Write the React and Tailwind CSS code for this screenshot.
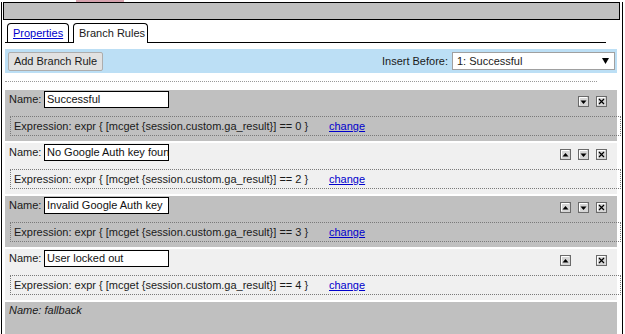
import React from "react";

const rules = [
  { name: "Successful", value: 0, tone: "dark", up: false, down: true },
  { name: "No Google Auth key found", value: 2, tone: "light", up: true, down: true },
  { name: "Invalid Google Auth key", value: 3, tone: "dark", up: true, down: true },
  { name: "User locked out", value: 4, tone: "light", up: true, down: false },
];

function IconBtn({ kind }) {
  return (
    <svg width="11" height="11" viewBox="0 0 11 11" className="block">
      <rect x="0.5" y="0.5" width="10" height="10" fill="#d6d6d6" stroke="#6a6a6a" />
      <path d="M1.5 9V1.5H9" stroke="#ffffff" fill="none" />
      {kind === "up" && <path d="M2.5 7.5h6L5.5 4z" fill="#000" />}
      {kind === "down" && <path d="M2.5 4.5h6L5.5 8z" fill="#000" />}
      {kind === "x" && (
        <path d="M3 3l5 5M8 3l-5 5" stroke="#000" strokeWidth="1.2" fill="none" />
      )}
    </svg>
  );
}

function Rule({ rule }) {
  const bg = rule.tone === "dark" ? "bg-[#c0c0c0]" : "bg-[#f0f0f0]";
  return (
    <div className={`mt-[2px] ml-[3px] w-[612px] h-[51px] ${bg}`}>
      <div className="flex">
        <div className="flex items-center h-[17px] mt-[1px]">
          <span className="w-[39px] pl-[4px]">Name:</span>
          <div className="w-[125px] h-[17px] border border-black bg-white pl-[2px] leading-[15px] overflow-hidden whitespace-nowrap text-[#111]">
            {rule.name}
          </div>
        </div>
        <div className="ml-auto mr-[10px] mt-[6px] flex gap-[7px]">
          <div className="w-[11px] h-[11px]">{rule.up && <IconBtn kind="up" />}</div>
          <div className="w-[11px] h-[11px]">{rule.down && <IconBtn kind="down" />}</div>
          <div className="w-[11px] h-[11px]">
            <IconBtn kind="x" />
          </div>
        </div>
      </div>
      <div className="mt-[8px] ml-[5px] w-[611px] h-[20px] border border-dotted border-[#7a7a7a] flex items-center pl-[3px] whitespace-nowrap">
        <span className="w-[315px]">
          Expression: expr {"{"} [mcget {"{"}session.custom.ga_result{"}"}] == {rule.value} {"}"}
        </span>
        <a href="#" className="text-[#0000cc] underline">
          change
        </a>
      </div>
    </div>
  );
}

function App() {
  return (
    <div className="relative w-[625px] h-[334px] bg-white overflow-hidden font-['Liberation_Sans',Arial,sans-serif] text-[11px] text-[#1a1a1a]">
      <div className="absolute left-[76px] top-0 w-[48px] h-[2px] bg-[#d7a3ae]" />
      <div className="ml-[1px] w-[622px] h-[334px] border-l border-r border-black">
        <div className="mt-[2px] ml-[1px] w-[617px] h-[18px] border border-black bg-[#c0c0c0]" />

        {/* tabs */}
        <div className="mt-[3px] ml-[3px] w-[601px] h-[20px] flex items-end border-b border-black">
          <div className="ml-[2px] w-[62px] h-[19px] border border-b-0 border-black rounded-t-[4px] flex items-center pl-[5px] whitespace-nowrap">
            <a href="#" className="text-[#0000cc] underline">
              Properties
            </a>
          </div>
          <div className="ml-[4px] w-[75px] h-[20px] -mb-px border border-b-0 border-black rounded-t-[4px] bg-white flex items-center pl-[5px] whitespace-nowrap">
            Branch Rules
          </div>
        </div>

        {/* toolbar */}
        <div className="mt-[6px] ml-[3px] w-[612px] h-[24px] bg-[#bcdff5] flex items-center pl-[3px] pr-[2px]">
          <button className="h-[19px] w-[95px] border border-[#adadad] bg-[#e1e1e1] rounded-[2px] text-[11px] text-[#1a1a1a] whitespace-nowrap">
            Add Branch Rule
          </button>
          <span className="ml-auto mr-[4px]">Insert Before:</span>
          <div className="w-[163px] h-[18px] border border-[#a0a0a0] bg-white flex items-center pl-[4px] pr-[5px]">
            <span>1: Successful</span>
            <svg width="7" height="6" viewBox="0 0 7 6" className="ml-auto">
              <path d="M0 0h7L3.5 6z" fill="#000" />
            </svg>
          </div>
        </div>

        <div className="mt-[8px] ml-[3px] w-[592px] border-t border-dotted border-[#999]" />

        <div className="mt-[8px]">
          {rules.map((r) => (
            <Rule key={r.value} rule={r} />
          ))}
          <div className="mt-[2px] ml-[3px] w-[612px] h-[40px] bg-[#c0c0c0]">
            <div className="h-[17px] mt-[1px] pl-[4px] flex items-center italic">Name: fallback</div>
          </div>
        </div>
      </div>
    </div>
  );
}

export default App;
